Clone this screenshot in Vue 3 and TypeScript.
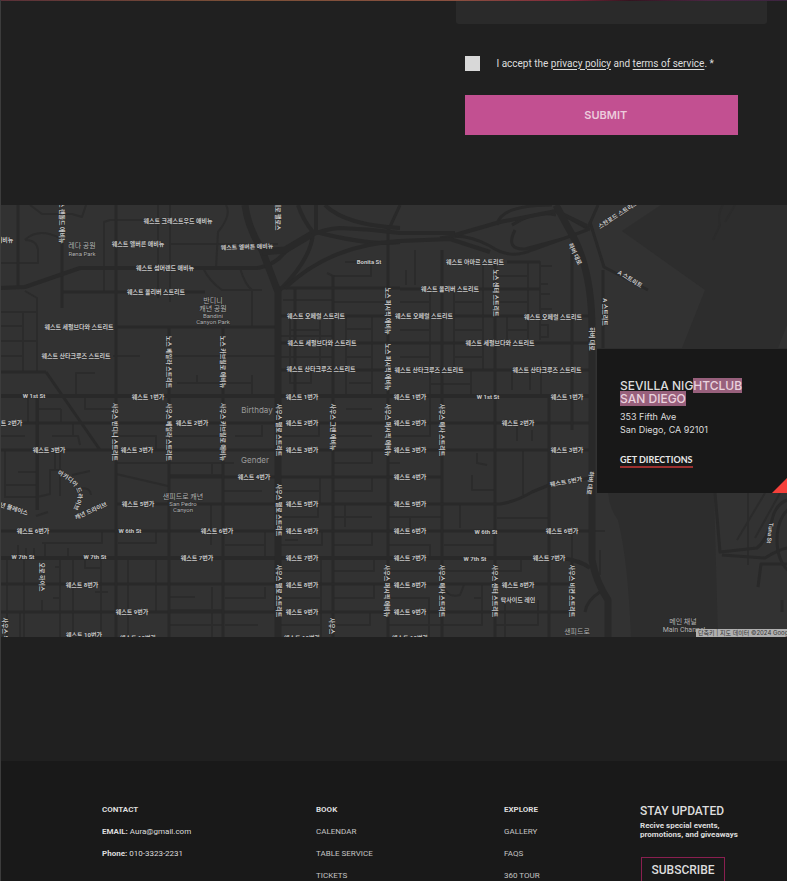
<script setup lang="ts">
type Label = [x: number, y: number, text: string, angle?: number]

const avenue = (n: number, y: number, xs: number[]): Label[] =>
  xs.map((x) => [x, y, `웨스트 ${n}번가`])

const streetLabels: Label[] = [
  [178, 221, '웨스트 크레스트우드 애비뉴'],
  [138, 244, '웨스트 엘버른 애비뉴'],
  [247, 247, '웨스트 엘버튼 애비뉴', -2],
  [5, 240, '애비뉴'],
  [165, 268, '웨스트 섬머랜드 애비뉴'],
  [156, 292, '웨스트 올리버 스트리트'],
  [79, 327, '웨스트 세펄브다와 스트리트'],
  [76, 356, '웨스트 산타크루즈 스트리트'],
  [34, 396, 'W 1st St'],
  [369, 262, 'Bonita St'],
  [475, 262, '웨스트 아마르 스트리트'],
  [450, 289, '웨스트 올리버 스트리트'],
  [316, 316, '웨스트 오페럴 스트리트'],
  [424, 316, '웨스트 오페럴 스트리트'],
  [553, 317, '웨스트 오페럴 스트리트'],
  [322, 343, '웨스트 세펄브다와 스트리트'],
  [500, 343, '웨스트 세펄브다와 스트리트'],
  [321, 369, '웨스트 산타크루즈 스트리트'],
  [429, 370, '웨스트 산타크루즈 스트리트'],
  [547, 370, '웨스트 산타크루즈 스트리트'],
  [488, 397, 'W 1st St'],
  ...avenue(1, 397, [148, 302, 410, 567]),
  ...avenue(2, 423, [6, 192, 302, 410, 518]),
  ...avenue(3, 450, [49, 137, 302, 410, 567]),
  ...avenue(4, 477, [254, 410]),
  ...avenue(5, 504, [138, 302, 410]),
  [566, 482, '웨스트 5번가', -10],
  ...avenue(6, 531, [33, 217, 302, 410, 562]),
  [130, 531, 'W 6th St'],
  [486, 532, 'W 6th St'],
  ...avenue(7, 558, [197, 302, 410, 549]),
  [23, 557, 'W 7th St'],
  [95, 557, 'W 7th St'],
  [475, 559, 'W 7th St'],
  ...avenue(8, 585, [82, 302, 410, 518]),
  ...avenue(9, 612, [132, 302, 410]),
  ...avenue(10, 635, [84]),
  ...avenue(10, 638, [138, 302, 410]),
  [518, 600, '탁사이드 레인'],
  [62, 220, '노스 랜돌드 애비뉴', 90],
  [278, 216, '레로 팰로스', 90],
  [169, 362, '노스 베일라 스트리트', 90],
  [223, 362, '노스 카브릴로 애비뉴', 90],
  [388, 311, '노스 퍼시픽 애비뉴', 90],
  [388, 367, '노스 퍼시픽 애비뉴', 90],
  [496, 293, '노스 센터 스트리트', 90],
  [115, 432, '사우스 반디니 스트리트', 90],
  [169, 432, '사우스 베일라 스트리트', 90],
  [223, 432, '사우스 카브릴로 애비뉴', 90],
  [279, 430, '사우스 팰로 스트리트', 90],
  [333, 427, '사우스 그랜 애비뉴', 90],
  [388, 430, '사우스 퍼시픽 애비뉴', 90],
  [442, 430, '사우스 메사 스트리트', 90],
  [279, 510, '사우스 팰로 스트리트', 90],
  [279, 591, '사우스 팰로 스트리트', 90],
  [387, 591, '사우스 퍼시픽 애비뉴', 90],
  [442, 591, '사우스 메사 스트리트', 90],
  [495, 591, '사우스 센터 스트리트', 90],
  [572, 591, '사우스 비컨 스트리트', 90],
  [42, 577, '오로 하이스', 90],
  [5, 632, '사우스 워커', 90],
  [332, 626, '사우스', 90],
  [605, 312, 'A 스트리트', 90],
  [592, 339, '하버 대로', 90],
  [575, 254, '하버 대로', 65],
  [590, 483, '하버 대로', 97],
  [618, 215, '스완포드 스트리트', -33],
  [630, 279, 'A 스트리트', 32],
  [770, 533, 'Tuna St', 97],
  [14, 509, '년 플레이스', 18],
  [91, 511, '캐년 드라이브', -24],
]

const placeLabels: Label[] = [
  [82, 246, '레다 공원'],
  [213, 301, '반디니'],
  [213, 309, '캐년 공원'],
  [183, 497, '샌피드로 캐년'],
  [577, 632, '샌피드로'],
  [683, 622, '메인 채널'],
  [684, 630, 'Main Channel'],
]

const smallLabels: Label[] = [
  [82, 254, 'Rena Park'],
  [213, 316, 'Bandini'],
  [213, 322, 'Canyon Park'],
  [183, 504, 'San Pedro'],
  [183, 510, 'Canyon'],
]

const roads = {
  minor: [
    'M30 205L42 214H72L82 217L86 205M25 240Q38 227 60 238M25 240Q37 240 38 250V263H0',
    'M25 291L37 298V372M23 312V372M0 312H37M0 326H22M0 341H37M0 356H22M113 356H140M170 356H278',
    'M104 292V222L110 220H210M158 205V298M170 205V302M170 244H278M76 395V373H95',
    'M85 395V409H115M28 397V423M38 397V510M61 409V423M0 436H25M38 409H61M52 436H78L80 445M73 423V436',
    'M226 205Q232 215 218 232L216 268M203 268Q210 282 222 290H262M240 268Q245 285 252 290V327',
    'M177 383H223M197 375V383M223 383H252V375M252 383V395',
    'M283 300H333M290 316V383H311V370M320 316V370M290 330H320M275 336H333M275 357H333',
    'M327 273L333 276H371V262M345 262H371M388 302H333M346 316V395M372 316V395M346 329H372M346 357H372M349 383H372',
    'M415 250V285M406 270V285M430 289V397M454 289V370M483 262V370M400 302H430M400 330H430M400 357H430M430 384H471M455 302H483M455 330H483M455 357H483M471 370V397',
    'M507 262H540V340M528 262V340M495 276H528M495 302H528M507 316V340M507 330H528M540 266H552M540 284H548M540 294H550M540 309H552M540 325H548V337H540M512 370V390M530 370V390M541 360V395M549 397V410',
    'M5 450V498M5 485H37M5 497H37L50 494V470H62M18 472H37M55 450V470M60 450V496M72 475L90 471M75 490Q90 485 91 495M36 516L48 512',
    'M42 543H102V531M45 543V557M18 545V557M26 548V557M34 548V557M68 548V557M7 558V637M24 558V637M60 558V637M73 558V637M101 558V637M128 558V637M156 558V612M55 567H60M85 560V568H101M53 598H60M95 592H108M20 612V637M42 600V612',
    'M116 463H169M116 436H156V450M116 474L168 486M169 436H223M169 463H223M169 475H223M118 543H156V531M169 584H223M170 597H195M170 610H223M170 625H223',
    'M235 436H262V425M223 463H234M212 464H212V477M237 450H278M223 491H262M211 505V545M265 531V557M225 545H265M225 598H265V587M225 625H258M212 587V637',
    'M280 436H319V423M320 477V505M280 491H320M280 517H318V504M280 545H322V531M285 540H298M321 558V637M280 571H321M280 598H321M280 625H321',
    'M334 436H372M333 463H372V450M333 491H372V477M345 504V527M333 517H372M333 545H372V531M333 571H374V558M333 598H374V584M333 625H370V612M346 409H372',
    'M388 436H430V397M388 463H400M388 517H442M388 545H430V558M388 571H442M388 598H429V637M388 625H442M410 517V531',
    'M477 453V463L487 465M472 475V490H495M460 504V528M523 450V495M497 518H548M444 545H495M442 571H521V558M444 587Q447 598 460 595L464 585M442 625H482V584M505 600V637M495 625H538V600M474 598H483M517 423V441M532 430V441M572 531V560',
    'M723 205Q717 215 720 225L713 240M735 205L725 222M748 493V565M765 493L737 540M780 493L755 538M592 531H605M600 550V575',
  ],
  street: [
    'M18 205V288M62 240V308M116 205V395M333 275V637M388 231V637M388 231L400 205M116 327H278M62 292H205',
    'M275 288H400M295 288V397M400 289H540M495 262V397M442 250V397M507 262H540M275 316H592M275 343H592M275 370H592',
    'M46 372H0M46 372L100 450M0 423H590M0 450H590M169 477H442M116 504H400M0 531H590M0 584H575M0 612H575',
    'M37 397V510M116 397V637M169 328V637M223 328V637M442 397V637M495 397V637M549 397V637M572 250V430M572 558V612',
    'M388 504H500Q515 502 532 492L549 485L590 478M603 270V348M590 222L604 267L648 290',
    'M585 612Q587 600 600 592M715 493L720 552L757 548Q767 540 772 520Q775 505 787 500M722 555L765 558Q778 550 787 548M758 587L761 564H787M782 600V612',
    'M598 205L587 230L532 250Q510 260 490 246Q465 232 440 238M497 225Q500 205 552 205M515 230Q505 250 525 249L562 239M512 225Q535 210 556 215M560 213L590 230',
  ],
  main: [
    'M0 288L25 287L80 268H258M0 396H590M0 558H560Q580 560 590 568',
    'M258 268Q275 265 285 252Q310 230 340 228Q370 229 400 233H455M298 205Q303 220 313 232Q312 258 280 290M316 205V232Q370 246 400 242',
    'M285 288Q330 245 400 241L450 239L490 252M325 205Q345 225 400 228M455 235L500 222L556 211L587 226',
  ],
  arterial: [
    'M245 205Q248 228 262 250L278 292V637',
    'M556 205Q565 222 575 240Q592 275 592 330V560Q596 582 608 600V637',
    'M262 252L285 250L312 234',
  ],
}

const place = ([x, y, , angle = 0]: Label): string => `translate(${x} ${y}) rotate(${angle})`

const bookLinks = ['CALENDAR', 'TABLE SERVICE', 'TICKETS']
const exploreLinks = ['GALLERY', 'FAQS', '360 TOUR']
</script>

<template>
  <div class="page">
    <form class="contact" @submit.prevent>
      <div class="field-end"></div>
      <div class="consent">
        <input id="accept" type="checkbox" class="check" />
        <label for="accept">I accept the <a href="#privacy">privacy policy</a> and <a href="#terms">terms of service</a>. *</label>
      </div>
      <button type="submit" class="submit">SUBMIT</button>
    </form>

    <section class="map">
      <svg class="canvas" viewBox="0 205 787 432" preserveAspectRatio="xMidYMid slice">
        <rect y="205" width="787" height="432" class="land" />
        <path class="water" d="M622 231L661 205H787V493H597V348H682L705 290Z" />
        <path class="water" d="M597 493H714L718 637H631Q628 560 618 520Q610 510 608 493Z" />
        <path class="land" d="M787 325L778 348H787Z" />
        <g class="roads">
          <path v-for="d in roads.minor" :key="d" :d="d" class="minor" />
          <path v-for="d in roads.street" :key="d" :d="d" class="street" />
          <path v-for="d in roads.main" :key="d" :d="d" class="main" />
          <path v-for="d in roads.arterial" :key="d" :d="d" class="arterial" />
          <ellipse cx="794" cy="540" rx="17" ry="32" class="street" />
        </g>
        <g class="labels">
          <text v-for="(l, i) in streetLabels" :key="i" :transform="place(l)" dy="2">{{ l[2] }}</text>
          <path id="arcadia" d="M57 474Q82 486 77 500Q75 506 69 518" fill="none" />
          <text class="curved"><textPath href="#arcadia">아카디아 드라이브</textPath></text>
        </g>
        <g class="labels places">
          <text v-for="(l, i) in placeLabels" :key="i" :transform="place(l)" dy="2">{{ l[2] }}</text>
        </g>
        <g class="labels small">
          <text v-for="(l, i) in smallLabels" :key="i" :transform="place(l)" dy="2">{{ l[2] }}</text>
        </g>
        <g class="labels notes">
          <text x="257" y="413">Birthday</text>
          <text x="255" y="463">Gender</text>
        </g>
      </svg>

      <div class="card">
        <h2>SEVILLA NIG<mark>HTCLUB</mark><br /><mark>SAN DIEGO</mark></h2>
        <p>353 Fifth Ave<br />San Diego, CA 92101</p>
        <a href="#directions" class="directions">GET DIRECTIONS</a>
      </div>
      <div class="credit">단축키 | 지도 데이터 ©2024 Google</div>
    </section>

    <footer class="footer">
      <div class="column">
        <h3>CONTACT</h3>
        <p><b>EMAIL:</b> Aura@gmail.com</p>
        <p><b>Phone:</b> 010-3323-2231</p>
      </div>
      <nav class="column">
        <h3>BOOK</h3>
        <a v-for="t in bookLinks" :key="t" href="#book">{{ t }}</a>
      </nav>
      <nav class="column">
        <h3>EXPLORE</h3>
        <a v-for="t in exploreLinks" :key="t" href="#explore">{{ t }}</a>
      </nav>
      <div class="updates">
        <h3>STAY UPDATED</h3>
        <p>Recive special events,<br />promotions, and giveaways</p>
        <button type="button" class="subscribe">SUBSCRIBE</button>
      </div>
    </footer>
  </div>
</template>

<style>
body {
  margin: 0;
  background: #191919;
}
html {
  overflow: hidden;
}
</style>

<style scoped>
.page {
  position: relative;
  height: 100vh;
  overflow: hidden;
  display: flex;
  flex-direction: column;
  background: #202020;
  color: #ddd;
  font-family: Inter, "Noto Sans CJK KR", sans-serif;
}
.page::before {
  content: "";
  position: absolute;
  z-index: 2;
  inset: 0 auto 0 0;
  width: 1px;
  background: #3c3c3c;
}
.page::after {
  content: "";
  position: absolute;
  inset: 0 0 auto;
  height: 1px;
  background: linear-gradient(90deg, #5a3038, #7b5037 30%, #8a5040 58%, #80283a 72%, #351420 80%, #4a2542 90%, #3c2440);
}
h2,
h3,
p {
  margin: 0;
}
.contact {
  height: 205px;
  flex: none;
  margin-left: 58%;
}
.field-end {
  height: 24px;
  margin-right: 20px;
  border-radius: 0 0 3px 3px;
  background: #2a2a2a;
}
.consent {
  display: flex;
  align-items: center;
  gap: 16px;
  height: 16px;
  margin: 31px 0 24px 9px;
  font: 10px Roboto, sans-serif;
  white-space: nowrap;
}
.check {
  appearance: none;
  width: 15px;
  height: 15px;
  margin: 0;
  background: #d8d8d8;
}
.consent a {
  color: inherit;
  text-underline-offset: 2px;
}
.submit {
  display: block;
  width: calc(100% - 58px);
  height: 40px;
  margin-left: 9px;
  padding: 0 0 0 8px;
  border: 0;
  background: #c25091;
  color: #eccbdc;
  font: 600 11px Inter, sans-serif;
}
.map {
  position: relative;
  flex: none;
  height: 432px;
  overflow: hidden;
}
.canvas {
  display: block;
  width: 100%;
  height: 100%;
}
.land {
  fill: #323232;
}
.water {
  fill: #2d2d2d;
}
.roads {
  fill: none;
  stroke: #292929;
  stroke-linejoin: round;
}
.minor {
  stroke-width: 2px;
  stroke: #2b2b2b;
}
.street {
  stroke-width: 3px;
}
.main {
  stroke-width: 4px;
}
.arterial {
  stroke-width: 7px;
}
.labels {
  fill: #c8c8c8;
  stroke: #292929;
  stroke-width: 1px;
  paint-order: stroke;
  text-anchor: middle;
  font: 700 6px Roboto, "Noto Sans CJK KR", sans-serif;
}
.labels path {
  stroke: none;
}
.curved {
  text-anchor: start;
}
.places {
  fill: #b4b4b4;
  font-size: 7px;
  font-weight: 400;
}
.small {
  fill: #b0b0b0;
  font-weight: 400;
}
.notes {
  fill: #9c9c9c;
  stroke: none;
  font: 400 8px Inter, sans-serif;
}
.card {
  position: absolute;
  top: 144px;
  right: 0;
  box-sizing: border-box;
  width: 190px;
  height: 144px;
  padding: 30px 0 0 23px;
  background: #181818;
  white-space: nowrap;
}
.card::after {
  content: "";
  position: absolute;
  right: 0;
  bottom: 0;
  width: 15px;
  height: 15px;
  background: #f5403a;
  clip-path: polygon(100% 0, 100% 100%, 0 100%);
}
.card h2 {
  font: 500 12px/13px Inter, sans-serif;
}
.card mark {
  background: #98607c;
  color: #ead2de;
}
.card p {
  margin-top: 5px;
  font: 400 9px/13px Inter, sans-serif;
}
.directions {
  display: inline-block;
  margin-top: 17px;
  border-bottom: 2px solid #9c302f;
  color: #e8e8e8;
  font: 700 9px/13px Lato, sans-serif;
  text-decoration: none;
}
.credit {
  position: absolute;
  right: 0;
  bottom: 0;
  width: 91px;
  height: 8px;
  overflow: hidden;
  background: #b0b0b0;
  color: #333;
  font-size: 6px;
  line-height: 8px;
  text-indent: 2px;
  white-space: nowrap;
}
.footer {
  flex: 1;
  min-height: 120px;
  display: grid;
  grid-template-columns: 214fr 188fr 136fr 147fr;
  box-sizing: border-box;
  margin-top: 124px;
  padding: 42px 0 0 102px;
  background: #191919;
  font-family: Roboto, sans-serif;
  white-space: nowrap;
}
.column {
  display: flex;
  flex-direction: column;
  align-items: flex-start;
  gap: 8px;
  font-size: 8px;
  line-height: 14px;
}
.column h3 {
  font-size: 8px;
  font-weight: 700;
}
.column b {
  font-weight: 700;
}
.column a {
  color: #c4c4c4;
  text-decoration: none;
}
.updates h3 {
  font-size: 12px;
  line-height: 16px;
  font-weight: 500;
}
.updates p {
  margin-top: 2px;
  font-size: 8px;
  line-height: 9px;
  font-weight: 700;
}
.subscribe {
  width: 84px;
  height: 26px;
  margin: 18px 0 0 1px;
  padding: 0;
  border: 1px solid #8a1f50;
  background: transparent;
  color: #ddd;
  font: 500 12px Roboto, sans-serif;
}
</style>
